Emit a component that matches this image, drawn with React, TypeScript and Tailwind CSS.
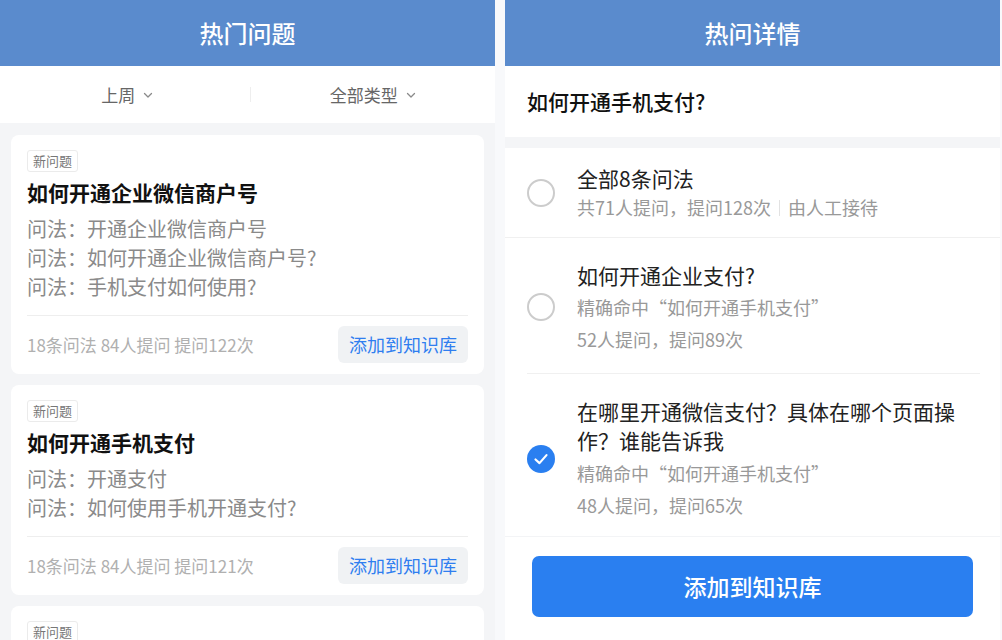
import React from "react";

const FONT = '"Noto Sans CJK SC", "Noto Sans", sans-serif';

function Chevron() {
  return (
    <svg width="10" height="7" viewBox="0 0 10 7" className="ml-[8px] mt-[1px]">
      <path d="M1.5 1.5l3.5 3.5 3.5-3.5" fill="none" stroke="#8a8a8a" strokeWidth="1.3" strokeLinecap="round" strokeLinejoin="round" />
    </svg>
  );
}

function Card({ title, lines, stats }: { title: string; lines: string[]; stats: string }) {
  return (
    <div className="bg-white rounded-[8px] px-[16px] pt-[15px] shrink-0">
      <div className="flex">
        <span className="h-[22px] px-[5px] border border-[#ebebeb] rounded-[3px] text-[13px] leading-[20px] text-[#777]">新问题</span>
      </div>
      <div className="mt-[5px] text-[21px] leading-[30px] font-bold text-[#111]">{title}</div>
      <div className="mt-[7px] flex flex-col">
        {lines.map((l, i) => (
          <div key={i} className="text-[20px] leading-[29px] text-[#8a8a8a]">
            问法：{l}
          </div>
        ))}
      </div>
      <div className="mt-[14px] border-t border-[#eeeeee] flex items-center justify-between pt-[10px] pb-[11px]">
        <span className="text-[17px] text-[#b0b0b0] whitespace-pre">{stats}</span>
        <button className="h-[37px] px-[11px] rounded-[6px] bg-[#f0f2f4] text-[18px] text-[#2f7ef0]">添加到知识库</button>
      </div>
    </div>
  );
}

function Radio({ checked }: { checked?: boolean }) {
  if (checked) {
    return (
      <div className="w-[28px] h-[28px] rounded-full bg-[#2a7ff0] flex items-center justify-center shrink-0">
        <svg width="28" height="28" viewBox="0 0 28 28">
          <path d="M8.5 14.5l4 3.6 7-8" fill="none" stroke="#fff" strokeWidth="2.2" strokeLinecap="round" strokeLinejoin="round" />
        </svg>
      </div>
    );
  }
  return <div className="w-[28px] h-[28px] rounded-full border-2 border-[#cccccc] shrink-0" />;
}

export default function App() {
  return (
    <div className="w-[1002px] h-[640px] overflow-hidden bg-[#f8f9fb] flex" style={{ fontFamily: FONT }}>
      {/* Left panel */}
      <div className="w-[495px] h-full flex flex-col bg-[#f4f5f7] overflow-hidden">
        <div className="h-[66px] bg-[#5a8bcd] flex items-center justify-center shrink-0">
          <span className="text-white text-[24px] font-medium">热门问题</span>
        </div>
        <div className="h-[57px] bg-white flex items-center shrink-0">
          <div className="flex-1 flex items-center justify-center pl-[5px] text-[17px] text-[#666]">
            上周
            <Chevron />
          </div>
          <div className="w-px h-[15px] bg-[#eeeeee]" />
          <div className="flex-1 flex items-center justify-center text-[17px] text-[#666]">
            全部类型
            <Chevron />
          </div>
        </div>
        <div className="flex flex-col gap-[11px] px-[11px] pt-[12px]">
          <Card
            title="如何开通企业微信商户号"
            lines={["开通企业微信商户号", "如何开通企业微信商户号?", "手机支付如何使用?"]}
            stats="18条问法 84人提问 提问122次"
          />
          <Card
            title="如何开通手机支付"
            lines={["开通支付", "如何使用手机开通支付?"]}
            stats="18条问法 84人提问 提问121次"
          />
          <Card title="如何开通企业支付" lines={["开通企业支付"]} stats="18条问法 84人提问 提问120次" />
        </div>
      </div>

      <div className="w-[10px] shrink-0" />

      {/* Right panel */}
      <div className="w-[495px] h-full flex flex-col bg-white overflow-hidden">
        <div className="h-[66px] bg-[#5a8bcd] flex items-center justify-center shrink-0">
          <span className="text-white text-[24px] font-medium">热问详情</span>
        </div>
        <div className="h-[71px] flex items-center px-[22px] shrink-0">
          <span className="text-[21px] font-medium text-[#111]">如何开通手机支付?</span>
        </div>
        <div className="h-[11px] bg-[#f4f5f7] shrink-0" />

        {/* Item 1 */}
        <div className="flex items-center pl-[22px] pr-[20px] pt-[16px] pb-[15px] border-b border-[#f0f0f0] shrink-0">
          <Radio />
          <div className="ml-[22px] flex flex-col">
            <div className="text-[21px] leading-[29px] text-[#222]">全部8条问法</div>
            <div className="text-[18px] leading-[29px] text-[#999] flex items-center">
              共71人提问，提问128次
              <span className="mx-[8px] w-px h-[16px] bg-[#e2e2e2]" />
              由人工接待
            </div>
          </div>
        </div>

        {/* Item 2 */}
        <div className="ml-[22px] mr-[20px] flex items-center pt-[21px] pb-[18px] border-b border-[#f0f0f0] shrink-0">
          <Radio />
          <div className="ml-[22px] flex flex-col">
            <div className="text-[21px] leading-[32px] text-[#222]">如何开通企业支付?</div>
            <div className="text-[18px] leading-[32px] text-[#999]">精确命中“如何开通手机支付”</div>
            <div className="text-[18px] leading-[32px] text-[#999]">52人提问，提问89次</div>
          </div>
        </div>

        {/* Item 3 */}
        <div className="flex items-center pl-[22px] pr-[20px] pt-[23px] pb-[15px] border-b border-[#f3f4f6] shrink-0">
          <Radio checked />
          <div className="ml-[22px] flex flex-col w-[392px]">
            <div className="text-[21px] leading-[29px] text-[#222]">在哪里开通微信支付？具体在哪个页面操作？谁能告诉我</div>
            <div className="mt-[2px] text-[18px] leading-[32px] text-[#999]">精确命中“如何开通手机支付”</div>
            <div className="text-[18px] leading-[32px] text-[#999]">48人提问，提问65次</div>
          </div>
        </div>

        <div className="px-[27px] pt-[19px]">
          <button className="w-full h-[61px] rounded-[7px] bg-[#2a7ff0] text-white text-[23px] font-medium">添加到知识库</button>
        </div>
      </div>
    </div>
  );
}
